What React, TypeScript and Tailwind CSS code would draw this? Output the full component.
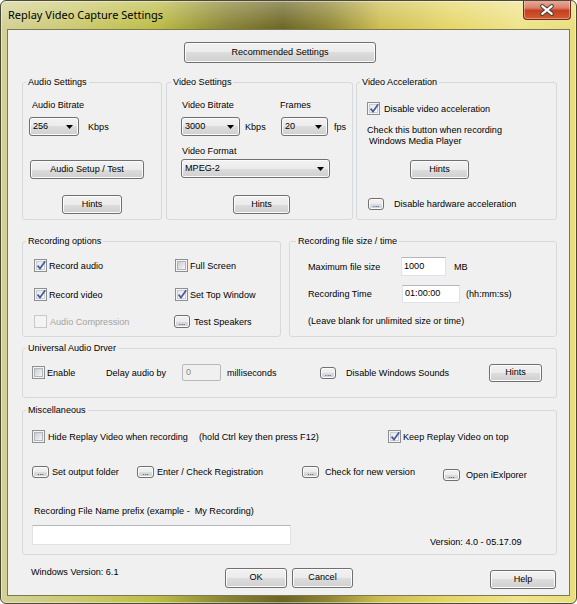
import React from "react";

type P = { className?: string; children?: React.ReactNode };

function Btn({ className = "", children }: P) {
  return (
    <div
      className={
        "flex shrink-0 items-center justify-center rounded-[3px] border border-[#707070] bg-[linear-gradient(#f2f2f2_0%,#ebebeb_50%,#dddddd_50%,#cfcfcf_100%)] shadow-[inset_0_0_0_1px_#fbfbfb] leading-none text-black " +
        className
      }
    >
      {children}
    </div>
  );
}

function Sel({ className = "", value }: { className?: string; value: string }) {
  return (
    <div
      className={
        "flex shrink-0 items-center justify-between rounded-[3px] border border-[#707070] bg-[linear-gradient(#f2f2f2_0%,#ebebeb_50%,#dddddd_50%,#cfcfcf_100%)] shadow-[inset_0_0_0_1px_#fbfbfb] pl-[3px] pr-[5px] leading-none " +
        className
      }
    >
      <span>{value}</span>
      <svg width="7" height="4" viewBox="0 0 7 4">
        <path d="M0 0H7L3.5 4Z" fill="#000" />
      </svg>
    </div>
  );
}

function Cb({ checked = false, disabled = false }: { checked?: boolean; disabled?: boolean }) {
  return (
    <span
      className={
        "relative flex h-[13px] w-[13px] shrink-0 items-center justify-center border " +
        (disabled ? "border-[#c9c9c9] bg-[#f4f4f4]" : "border-[#8e8f8f] bg-[#f4f4f4]")
      }
    >
      {!disabled && (
        <span
          className={
            "h-[9px] w-[9px] border " +
            (checked
              ? "border-[#c9ced4] bg-[linear-gradient(135deg,#e2e5e9,#ffffff)]"
              : "border-[#b0b5bb] bg-[linear-gradient(135deg,#c9cdd3,#f6f6f6)]")
          }
        />
      )}
      {checked && (
        <svg className="absolute left-[0px] top-[-1px]" width="13" height="13" viewBox="0 0 13 13">
          <path d="M2.6 6.6 L5 9.6 L10.2 2.2" fill="none" stroke="#4a5e9c" strokeWidth="1.8" />
        </svg>
      )}
    </span>
  );
}

function Dot({ className = "" }: P) {
  return (
    <div
      className={
        "flex shrink-0 items-end justify-center rounded-[3px] border border-[#707070] bg-[linear-gradient(#f2f2f2_0%,#ebebeb_50%,#dddddd_50%,#cfcfcf_100%)] shadow-[inset_0_0_0_1px_#fbfbfb] pb-[1px] text-[8px] leading-[6px] text-black " +
        className
      }
    >
      ...
    </div>
  );
}

function Inp({ className = "", children }: P) {
  return (
    <div
      className={
        "flex shrink-0 items-center border border-[#dfe3e8] border-t-[#b3b6bd] bg-white pl-[2px] leading-none " +
        className
      }
    >
      {children}
    </div>
  );
}

function Group({
  title,
  className = "",
  legendClass = "ml-[3px]",
  children,
}: {
  title: string;
  className?: string;
  legendClass?: string;
  children?: React.ReactNode;
}) {
  return (
    <fieldset className={"shrink-0 rounded-[3px] border border-[#d5d9dc] " + className}>
      <legend className={"px-[2px] leading-[12px] " + legendClass}>{title}</legend>
      {children}
    </fieldset>
  );
}

export default function App() {
  return (
    <div className="h-[604px] w-[577px] bg-white">
      <div className="flex h-[604px] w-[577px] flex-col overflow-hidden rounded-[6px] border border-[#4b4a36] bg-[linear-gradient(180deg,rgba(255,255,255,0.3)_0px,rgba(255,255,255,0)_28px),linear-gradient(90deg,#d3d196_0%,#cbc96c_14%,#bcbd45_27%,#8a8434_39%,#6c6524_49%,#8f8633_57%,#cdbd50_66%,#e5d668_78%,#efe38a_90%,#e9de7c_100%)] px-[6px] pb-[7px] font-['Liberation_Sans',Arial,sans-serif] text-[9.1px] leading-[12px] text-black shadow-[inset_0_0_0_1px_rgba(255,255,255,0.45)]">
        {/* Title bar */}
        <div className="flex h-[28px] shrink-0 items-start justify-between">
          <div className="mt-[6px] pl-[1px] font-['Noto_Sans',sans-serif] text-[11px] leading-[16px] text-black">
            Replay Video Capture Settings
          </div>
          <div className="-mr-[1px] -mt-[1px] flex h-[20px] w-[48px] items-center justify-center rounded-b-[4px] border border-t-0 border-[#6b2c1f] bg-[linear-gradient(#eab0a2_0%,#dc7e69_42%,#c4401f_55%,#d55a2f_100%)] shadow-[inset_0_0_0_1px_rgba(255,255,255,0.35)]">
            <svg width="48" height="20" viewBox="0 0 48 20">
              <path d="M19 6 L29 14 M29 6 L19 14" stroke="#45403a" strokeWidth="4.4" strokeLinecap="round" fill="none" />
              <path d="M19 6 L29 14 M29 6 L19 14" stroke="#ffffff" strokeWidth="2.2" strokeLinecap="round" fill="none" />
            </svg>
          </div>
        </div>

        {/* Client area */}
        <div className="flex h-[567px] shrink-0 flex-col border border-[#7b7856] bg-[#f0f0f0] pl-[14px]">
          <Btn className="ml-[162px] mt-[12px] h-[21px] w-[192px] shadow-[inset_0_0_0_1px_#fbfbfb,0_0_0_1px_#d9d9d9]">
            Recommended Settings
          </Btn>

          {/* Row 1 */}
          <div className="mt-[13px] flex">
            <Group title="Audio Settings" className="h-[144px] w-[140px]">
              <div className="flex flex-col items-start pl-[6px]">
                <div className="ml-[3px] mt-[11px] leading-[12px]">Audio Bitrate</div>
                <div className="mt-[6px] flex items-center">
                  <Sel className="h-[19px] w-[50px]" value="256" />
                  <span className="ml-[9px]">Kbps</span>
                </div>
                <Btn className="ml-[1px] mt-[24px] h-[19px] w-[114px]">Audio Setup / Test</Btn>
                <Btn className="ml-[33px] mt-[16px] h-[19px] w-[60px]">Hints</Btn>
              </div>
            </Group>

            <Group title="Video Settings" className="ml-[4px] h-[144px] w-[187px]" legendClass="ml-[4px]">
              <div className="flex flex-col items-start pl-[14px]">
                <div className="mt-[11px] flex">
                  <div className="flex w-[100px] flex-col items-start">
                    <div className="ml-[1px] leading-[12px]">Video Bitrate</div>
                    <div className="mt-[6px] flex items-center">
                      <Sel className="h-[19px] w-[59px]" value="3000" />
                      <span className="ml-[5px]">Kbps</span>
                    </div>
                  </div>
                  <div className="flex flex-col items-start">
                    <div className="-ml-[1px] leading-[12px]">Frames</div>
                    <div className="mt-[6px] flex items-center">
                      <Sel className="h-[19px] w-[47px]" value="20" />
                      <span className="ml-[6px]">fps</span>
                    </div>
                  </div>
                </div>
                <div className="ml-[1px] mt-[9px] leading-[12px]">Video Format</div>
                <Sel className="mt-[2px] h-[19px] w-[149px]" value="MPEG-2" />
                <Btn className="ml-[52px] mt-[17px] h-[19px] w-[57px]">Hints</Btn>
              </div>
            </Group>

            <Group title="Video Acceleration" className="ml-[3px] h-[144px] w-[201px]" legendClass="ml-[3px]">
              <div className="flex flex-col items-start pl-[10px]">
                <div className="mt-[14px] flex items-center">
                  <Cb checked />
                  <span className="ml-[4px]">Disable video acceleration</span>
                </div>
                <div className="mt-[10px] leading-[11px]">
                  <div>Check this button when recording</div>
                  <div className="ml-[2px]">Windows Media Player</div>
                </div>
                <Btn className="ml-[43px] mt-[13px] h-[19px] w-[59px]">Hints</Btn>
                <div className="mt-[19px] flex items-center">
                  <Dot className="ml-[1px] h-[12px] w-[16px]" />
                  <span className="ml-[10px]">Disable hardware acceleration</span>
                </div>
              </div>
            </Group>
          </div>

          {/* Row 2 */}
          <div className="mt-[15px] flex">
            <Group title="Recording options" className="h-[102px] w-[259px]">
              <div className="flex flex-col pl-[11px]">
                <div className="mt-[12px] flex h-[13px] items-center">
                  <div className="flex w-[141px] items-center">
                    <Cb checked />
                    <span className="ml-[2px]">Record audio</span>
                  </div>
                  <div className="flex items-center">
                    <Cb />
                    <span className="ml-[2px]">Full Screen</span>
                  </div>
                </div>
                <div className="mt-[16px] flex h-[13px] items-center">
                  <div className="flex w-[141px] items-center">
                    <Cb checked />
                    <span className="ml-[2px]">Record video</span>
                  </div>
                  <div className="flex items-center">
                    <Cb checked />
                    <span className="ml-[2px]">Set Top Window</span>
                  </div>
                </div>
                <div className="mt-[14px] flex h-[13px] items-center">
                  <div className="flex w-[141px] items-center">
                    <Cb disabled />
                    <span className="ml-[3px] text-[#a3a3a3]">Audio Compression</span>
                  </div>
                  <div className="flex items-center">
                    <Dot className="-ml-[1px] h-[13px] w-[16px]" />
                    <span className="ml-[4px]">Test Speakers</span>
                  </div>
                </div>
              </div>
            </Group>

            <Group title="Recording file size / time" className="ml-[8px] h-[102px] w-[268px]" legendClass="ml-[6px]">
              <div className="flex flex-col pl-[18px]">
                <div className="mt-[10px] flex h-[19px] items-center">
                  <span className="w-[93px]">Maximum file size</span>
                  <Inp className="h-[19px] w-[45px]">1000</Inp>
                  <span className="ml-[8px]">MB</span>
                </div>
                <div className="mt-[9px] flex h-[18px] items-center">
                  <span className="w-[94px]">Recording Time</span>
                  <Inp className="h-[18px] w-[58px]">01:00:00</Inp>
                  <span className="ml-[6px]">(hh:mm:ss)</span>
                </div>
                <div className="mt-[12px] leading-[12px]">(Leave blank for unlimited size or time)</div>
              </div>
            </Group>
          </div>

          {/* Universal Audio Driver */}
          <Group title="Universal Audio Drver" className="mt-[5px] h-[56px] w-[535px]">
            <div className="mt-[10px] flex h-[17px] items-center pl-[9px]">
              <Cb />
              <span className="ml-[2px] w-[59px] shrink-0">Enable</span>
              <span className="w-[76px] shrink-0">Delay audio by</span>
              <div className="flex h-[17px] w-[39px] shrink-0 items-center rounded-[2px] border border-[#b5b9bd] bg-[#f0f0f0] pl-[3px] leading-none text-[#8a8a8a]">
                0
              </div>
              <span className="ml-[6px] w-[93px] shrink-0">milliseconds</span>
              <Dot className="h-[12px] w-[16px]" />
              <span className="ml-[10px] w-[143px] shrink-0">Disable Windows Sounds</span>
              <Btn className="h-[18px] w-[53px]">Hints</Btn>
            </div>
          </Group>

          {/* Miscellaneous */}
          <Group title="Miscellaneous" className="mt-[6px] h-[151px] w-[535px]">
            <div className="flex flex-col pl-[9px]">
              <div className="mt-[14px] flex h-[13px] items-center">
                <Cb />
                <span className="ml-[3px] w-[151px] shrink-0">Hide Replay Video when recording</span>
                <span className="w-[189px] shrink-0">(hold Ctrl key then press F12)</span>
                <Cb checked />
                <span className="ml-[2px]">Keep Replay Video on top</span>
              </div>
              <div className="mt-[23px] flex h-[12px] items-center">
                <Dot className="h-[12px] w-[17px]" />
                <span className="ml-[3px] w-[85px] shrink-0">Set output folder</span>
                <Dot className="h-[12px] w-[17px]" />
                <span className="ml-[3px] w-[145px] shrink-0">Enter / Check Registration</span>
                <Dot className="h-[12px] w-[17px]" />
                <span className="ml-[6px] w-[118px] shrink-0">Check for new version</span>
                <div className="mt-[5px] flex items-center">
                  <Dot className="h-[12px] w-[17px]" />
                  <span className="ml-[6px]">Open iExlporer</span>
                </div>
              </div>
              <div className="ml-[2px] mt-[27px] whitespace-pre leading-[12px]">
                {"Recording File Name prefix (example -  My Recording)"}
              </div>
              <div className="mt-[8px] flex items-start">
                <Inp className="h-[20px] w-[259px]" />
                <span className="ml-[139px] mt-[11px] leading-[12px]">Version: 4.0 - 05.17.09</span>
              </div>
            </div>
          </Group>

          {/* Bottom buttons */}
          <div className="mt-[11px] flex items-start pl-[9px]">
            <span className="w-[194px] shrink-0 leading-[12px]">Windows Version: 6.1</span>
            <Btn className="mt-[2px] h-[20px] w-[62px] border-[#3c7fb1] shadow-[inset_0_0_0_1px_#fbfbfb,inset_0_0_0_2px_#bfe3f6]">
              OK
            </Btn>
            <Btn className="ml-[5px] mt-[2px] h-[20px] w-[61px]">Cancel</Btn>
            <Btn className="ml-[137px] mt-[4px] h-[19px] w-[66px]">Help</Btn>
          </div>
        </div>
      </div>
    </div>
  );
}
